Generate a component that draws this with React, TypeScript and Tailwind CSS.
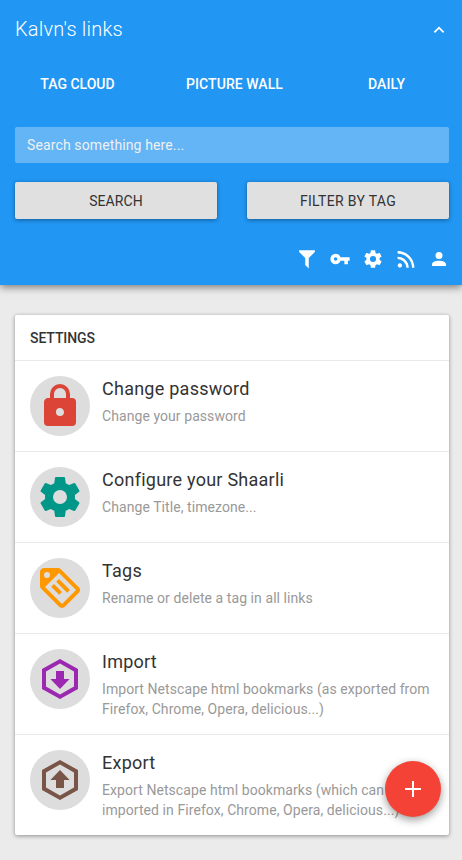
import React from "react";

const paths = {
  chevronUp: "M7.41,15.41L12,10.83L16.59,15.41L18,14L12,8L6,14L7.41,15.41Z",
  filter: "M3,2H21V4H20.92L14,10.92V22.91L10,18.91V10.91L3.09,4H3V2Z",
  key: "M7,14A2,2 0 0,1 5,12A2,2 0 0,1 7,10A2,2 0 0,1 9,12A2,2 0 0,1 7,14M12.65,10C11.83,7.67 9.61,6 7,6A6,6 0 0,0 1,12A6,6 0 0,0 7,18C9.61,18 11.83,16.33 12.65,14H17V18H21V14H23V10H12.65Z",
  settings:
    "M12,15.5A3.5,3.5 0 0,1 8.5,12A3.5,3.5 0 0,1 12,8.5A3.5,3.5 0 0,1 15.5,12A3.5,3.5 0 0,1 12,15.5M19.43,12.97C19.47,12.65 19.5,12.33 19.5,12C19.5,11.67 19.47,11.34 19.43,11L21.54,9.37C21.73,9.22 21.78,8.95 21.66,8.73L19.66,5.27C19.54,5.05 19.27,4.96 19.05,5.05L16.56,6.05C16.04,5.66 15.5,5.32 14.87,5.07L14.5,2.42C14.46,2.18 14.25,2 14,2H10C9.75,2 9.54,2.18 9.5,2.42L9.13,5.07C8.5,5.32 7.96,5.66 7.44,6.05L4.95,5.05C4.73,4.96 4.46,5.05 4.34,5.27L2.34,8.73C2.21,8.95 2.27,9.22 2.46,9.37L4.57,11C4.53,11.34 4.5,11.67 4.5,12C4.5,12.33 4.53,12.65 4.57,12.97L2.46,14.63C2.27,14.78 2.21,15.05 2.34,15.27L4.34,18.73C4.46,18.95 4.73,19.03 4.95,18.95L7.44,17.94C7.96,18.34 8.5,18.68 9.13,18.93L9.5,21.58C9.54,21.82 9.75,22 10,22H14C14.25,22 14.46,21.82 14.5,21.58L14.87,18.93C15.5,18.67 16.04,18.34 16.56,17.94L19.05,18.95C19.27,19.03 19.54,18.95 19.66,18.73L21.66,15.27C21.78,15.05 21.73,14.78 21.54,14.63L19.43,12.97Z",
  rss: "M5,16.9A2.5,2.5 0 1,1 4.99,16.9M2.4,2.9A19.2,19.2 0 0,1 21.6,22.1H18.9A16.5,16.5 0 0,0 2.4,5.6V2.9M2.4,9.4A12.7,12.7 0 0,1 15.1,22.1H12.4A10,10 0 0,0 2.4,12.1V9.4Z",
  account:
    "M12,4A4,4 0 0,1 16,8A4,4 0 0,1 12,12A4,4 0 0,1 8,8A4,4 0 0,1 12,4M12,14C16.42,14 20,15.79 20,18V20H4V18C4,15.79 7.58,14 12,14Z",
  lock: "M12,17A2,2 0 0,0 14,15C14,13.89 13.1,13 12,13A2,2 0 0,0 10,15A2,2 0 0,0 12,17M18,8A2,2 0 0,1 20,10V20A2,2 0 0,1 18,22H6A2,2 0 0,1 4,20V10C4,8.89 4.9,8 6,8H7V6A5,5 0 0,1 12,1A5,5 0 0,1 17,6V8H18M12,3A3,3 0 0,0 9,6V8H15V6A3,3 0 0,0 12,3Z",
  tag: "M5.5,7A1.5,1.5 0 0,0 7,5.5A1.5,1.5 0 0,0 5.5,4A1.5,1.5 0 0,0 4,5.5A1.5,1.5 0 0,0 5.5,7M21.41,11.58C21.77,11.94 22,12.44 22,13C22,13.55 21.78,14.05 21.41,14.41L14.41,21.41C14.05,21.77 13.55,22 13,22C12.45,22 11.95,21.77 11.58,21.41L2.59,12.41C2.22,12.05 2,11.55 2,11V4C2,2.89 2.89,2 4,2H11C11.55,2 12.05,2.22 12.41,2.58L21.41,11.58M13,20L20,13L11.5,4.5L4.5,11.5L13,20M10.09,8.91L11.5,7.5L17,13L15.59,14.41L10.09,8.91M7.59,11.41L9,10L13,14L11.59,15.41L7.59,11.41Z",
  importBox: "M12,2L21,7V17L12,22L3,17V7L12,2M12,4.3L5,8.2V15.8L12,19.7L19,15.8V8.2L12,4.3M10,8H14V12H16.8L12,17L7.2,12H10V8Z",
  exportBox: "M12,2L21,7V17L12,22L3,17V7L12,2M12,4.3L5,8.2V15.8L12,19.7L19,15.8V8.2L12,4.3M10,16H14V12H16.8L12,7L7.2,12H10V16Z",
  plus: "M20,13H13V20H11V13H4V11H11V4H13V11H20V13Z",
};

type IconName = keyof typeof paths;

function Icon({ name, className, viewBox = "0 0 24 24" }: { name: IconName; className: string; viewBox?: string }) {
  return (
    <svg viewBox={viewBox} className={className} fill="currentColor" fillRule="evenodd" aria-hidden="true">
      <path d={paths[name]} />
    </svg>
  );
}

function BarIcon({ name }: { name: IconName }) {
  return <Icon name={name} className="size-[22px]" viewBox="-0.57 -0.57 25.14 25.14" />;
}

const tools: IconName[] = ["filter", "key", "settings", "rss", "account"];

const settings: { icon: IconName; color: string; title: string; text: string }[] = [
  { icon: "lock", color: "text-[#db4437]", title: "Change password", text: "Change your password" },
  { icon: "settings", color: "text-[#009688]", title: "Configure your Shaarli", text: "Change Title, timezone..." },
  { icon: "tag", color: "text-[#ff9800]", title: "Tags", text: "Rename or delete a tag in all links" },
  {
    icon: "importBox",
    color: "text-[#9c27b0]",
    title: "Import",
    text: "Import Netscape html bookmarks (as exported from Firefox, Chrome, Opera, delicious...)",
  },
  {
    icon: "exportBox",
    color: "text-[#795548]",
    title: "Export",
    text: "Export Netscape html bookmarks (which can be imported in Firefox, Chrome, Opera, delicious...)",
  },
];

const buttonClass =
  "h-[37px] flex-1 rounded-[2px] bg-[#e0e0e0] text-sm text-[#333] shadow-[0_1px_4px_rgba(0,0,0,0.4)]";

export default function App() {
  return (
    <div className="min-h-[860px] w-full bg-[#ebebeb] font-[Roboto,sans-serif] text-sm text-[#333]">
      <header className="flex h-[285px] flex-col bg-[#2196f3] text-white shadow-[0_2px_8px_rgba(0,0,0,0.5)]">
        <div className="flex h-[58px] items-center justify-between pl-[15px] pr-3">
          <h1 className="text-xl font-light tracking-[0.22px]">Kalvn's links</h1>
          <div className="mt-0.5">
            <BarIcon name="chevronUp" />
          </div>
        </div>
        <nav className="flex h-[52px] items-center text-center font-medium">
          <a className="w-[155px]">TAG CLOUD</a>
          <a className="w-[159px] tracking-[0.05px]">PICTURE WALL</a>
          <a className="w-[145px] tracking-[0.1px]">DAILY</a>
        </nav>
        <div className="pl-[15px] pr-[13px] pt-[17px]">
          <input
            className="block h-9 w-full rounded-[2px] bg-white/30 px-3 text-sm tracking-[0.12px] placeholder:text-[#f0f0f0] placeholder:opacity-100"
            placeholder="Search something here..."
          />
          <div className="mt-[19px] flex gap-[30px]">
            <button className={buttonClass + " tracking-[0.1px]"}>SEARCH</button>
            <button className={buttonClass + " tracking-[0.32px]"}>FILTER BY TAG</button>
          </div>
        </div>
        <div className="mt-[29px] flex justify-end gap-[11px] pr-3">
          {tools.map((name) => (
            <BarIcon key={name} name={name} />
          ))}
        </div>
      </header>

      <main className="ml-[15px] mr-[13px] mt-[30px] rounded-[2px] bg-white shadow-[0_1px_4px_rgba(0,0,0,0.4)]">
        <h2 className="flex h-[46px] items-center border-b border-[#e9e9e9] px-[15px] font-medium tracking-[-0.08px]">
          SETTINGS
        </h2>
        {settings.map((item) => (
          <section key={item.title} className="flex border-b border-[#e9e9e9] p-[15px] last:border-b-0">
            <div className="flex size-[60px] shrink-0 items-center justify-center rounded-full bg-[#ddd]">
              <Icon name={item.icon} className={"size-12 " + item.color} />
            </div>
            <div className="ml-3 min-w-0 flex-1">
              <h3 className="mb-1 text-lg leading-[26px] tracking-[0.25px]">{item.title}</h3>
              <p className="leading-5 tracking-[0.07px] text-[#999]">{item.text}</p>
            </div>
          </section>
        ))}
      </main>

      <button className="fixed left-[385px] top-[761px] flex size-14 items-center justify-center rounded-full bg-[#f44336] text-white shadow-[0_3px_8px_rgba(0,0,0,0.4)]">
        <Icon name="plus" className="size-6" />
      </button>
    </div>
  );
}
